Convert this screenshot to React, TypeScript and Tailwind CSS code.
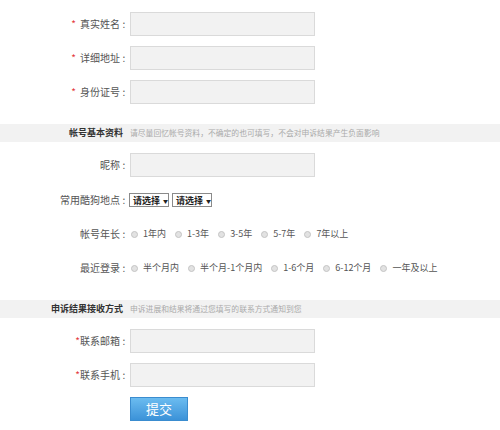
const font = { fontFamily: '"Noto Sans CJK SC", "Noto Sans", sans-serif' };

function Label({ text, star, spaced }: { text: string; star?: boolean; spaced?: boolean }) {
  return (
    <div className="flex w-[128px] shrink-0 items-center justify-end whitespace-nowrap text-[10px] leading-none text-[#555]">
      {star ? <span className={spaced ? "mr-[4px] text-[#e4393c]" : "text-[#e4393c]"}>*</span> : null}
      <span>{text}</span>
      <span className="w-[8px] text-center">:</span>
    </div>
  );
}

function TextRow({ label, star, spaced, className }: { label: string; star?: boolean; spaced?: boolean; className?: string }) {
  return (
    <div className={`flex h-[24px] items-center ${className ?? ""}`}>
      <Label text={label} star={star} spaced={spaced} />
      <div className="ml-[2px] h-[24px] w-[185px] border border-[#dadada] bg-[#f2f2f2]" />
    </div>
  );
}

function Section({ title, hint, className }: { title: string; hint: string; className?: string }) {
  return (
    <div className={`flex h-[18px] items-center bg-[#f2f2f2] ${className ?? ""}`}>
      <div className="w-[123px] shrink-0 whitespace-nowrap text-right text-[9px] font-bold text-[#333]">{title}</div>
      <div className="ml-[7px] whitespace-nowrap text-[7.8px] text-[#aaa]">{hint}</div>
    </div>
  );
}

function Radio({ text }: { text: string }) {
  return (
    <span className="mr-[9px] flex items-center whitespace-nowrap">
      <span className="h-[7px] w-[7px] rounded-full border border-[#c4c4c4] bg-[#e2e2e2]" />
      <span className="ml-[5px] text-[9px] text-[#555]">{text}</span>
    </span>
  );
}

function FakeSelect() {
  return (
    <span className="mr-[3px] flex h-[14px] w-[40px] items-center whitespace-nowrap border border-[#8a8a8a] bg-white pl-[3px] text-[9px] font-bold leading-none text-[#222]">
      请选择
      <span className="ml-[3px] text-[5px]">▼</span>
    </span>
  );
}

export default function App() {
  return (
    <div className="h-[430px] w-[500px] bg-white pt-[12px]" style={font}>
      <TextRow label="真实姓名" star spaced />
      <TextRow label="详细地址" star spaced className="mt-[10px]" />
      <TextRow label="身份证号" star spaced className="mt-[10px]" />

      <Section
        className="mt-[20px]"
        title="帐号基本资料"
        hint="请尽量回忆帐号资料，不确定的也可填写，不会对申诉结果产生负面影响"
      />

      <TextRow label="昵称" className="mt-[11px]" />

      <div className="mt-[11px] flex h-[24px] items-center">
        <Label text="常用酷狗地点" />
        <div className="ml-[1px] flex">
          <FakeSelect />
          <FakeSelect />
        </div>
      </div>

      <div className="mt-[10px] flex h-[24px] items-center">
        <Label text="帐号年长" />
        <div className="ml-[3px] flex items-center">
          {["1年内", "1-3年", "3-5年", "5-7年", "7年以上"].map((t) => (
            <Radio key={t} text={t} />
          ))}
        </div>
      </div>

      <div className="mt-[10px] flex h-[24px] items-center">
        <Label text="最近登录" />
        <div className="ml-[3px] flex items-center">
          {["半个月内", "半个月-1个月内", "1-6个月", "6-12个月", "一年及以上"].map((t) => (
            <Radio key={t} text={t} />
          ))}
        </div>
      </div>

      <Section
        className="mt-[20px]"
        title="申诉结果接收方式"
        hint="申诉进展和结果将通过您填写的联系方式通知到您"
      />

      <TextRow label="联系邮箱" star className="mt-[11px]" />
      <TextRow label="联系手机" star className="mt-[10px]" />

      <div className="mt-[10px] flex">
        <button className="ml-[130px] h-[24px] w-[58px] border border-[#3a8ccf] bg-gradient-to-b from-[#6bbcf0] to-[#3b92d8] text-[13px] text-white">
          提交
        </button>
      </div>
    </div>
  );
}
